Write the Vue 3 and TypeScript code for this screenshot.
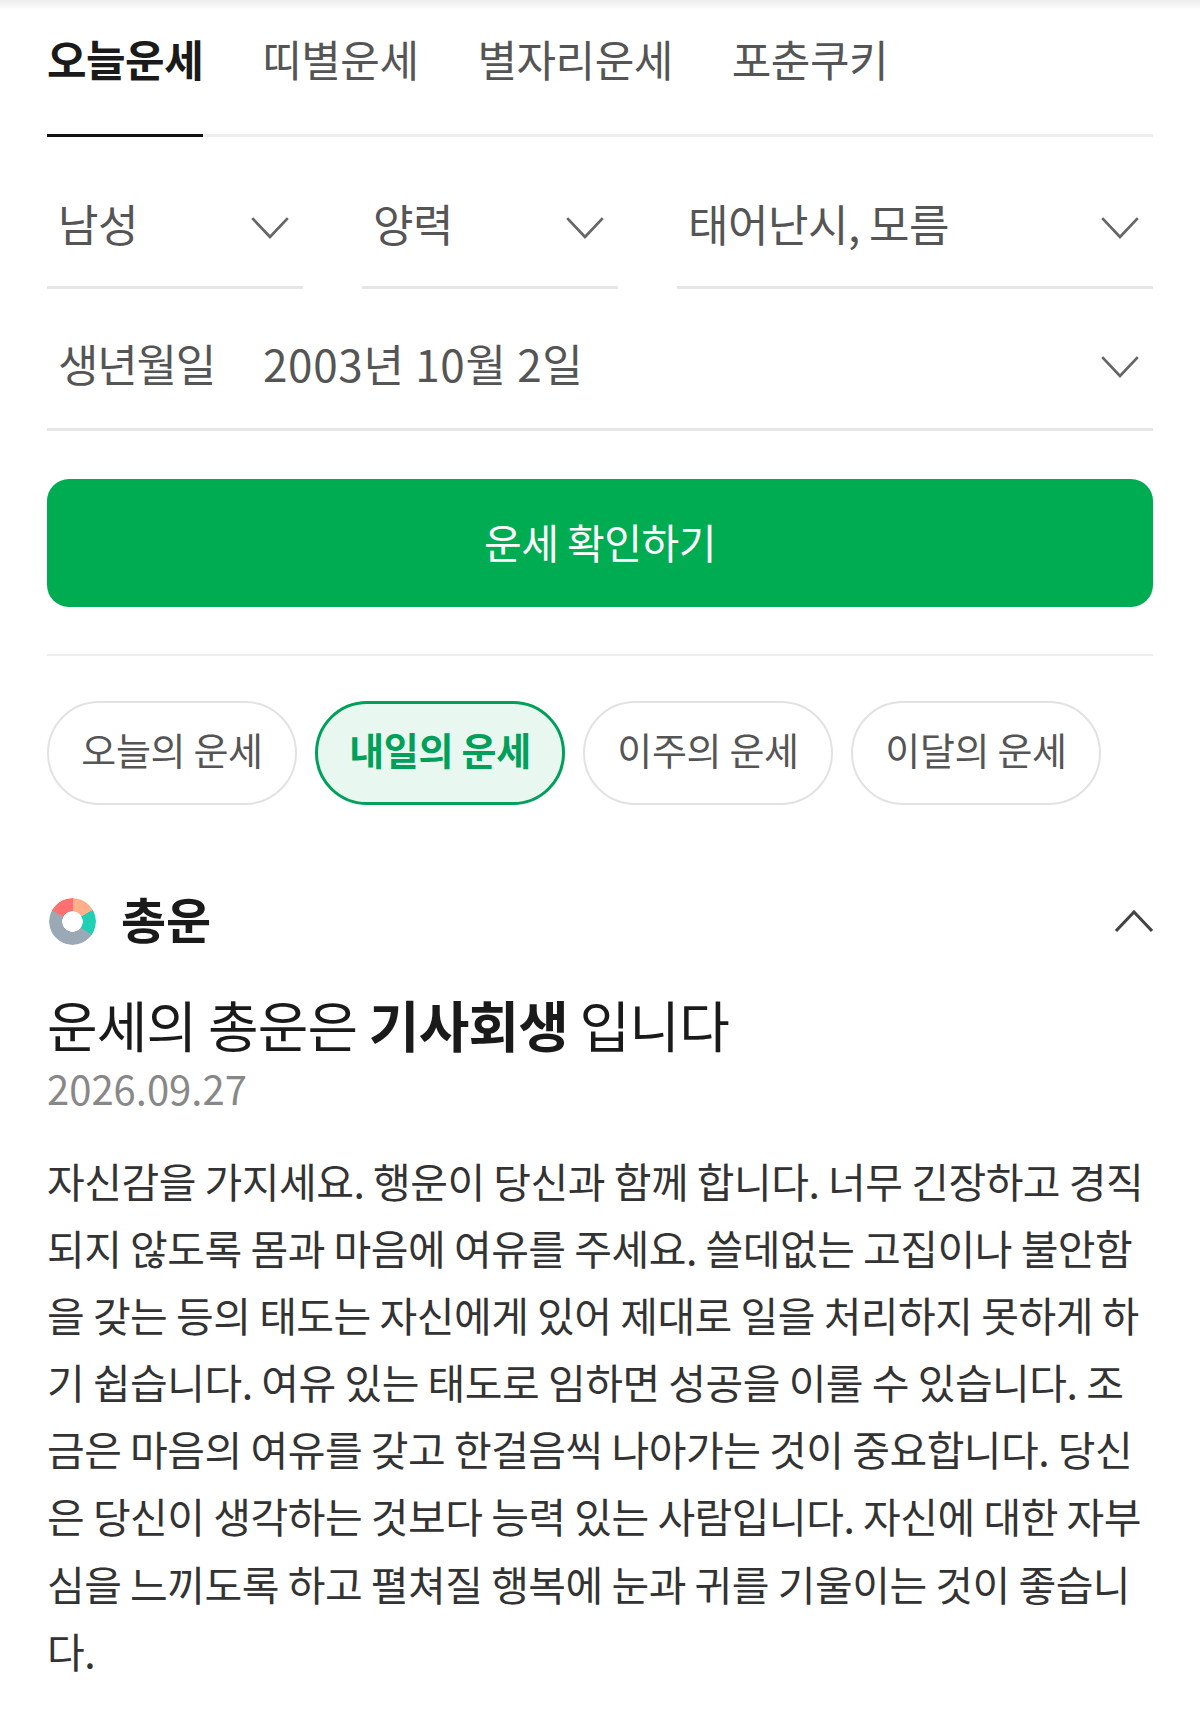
<script setup lang="ts">
const tabs = ['오늘운세', '띠별운세', '별자리운세', '포춘쿠키'];
const chips = ['오늘의 운세', '내일의 운세', '이주의 운세', '이달의 운세'];

// line breaks follow the reference
const lines = [
  '자신감을 가지세요. 행운이 당신과 함께 합니다. 너무 긴장하고 경직',
  '되지 않도록 몸과 마음에 여유를 주세요. 쓸데없는 고집이나 불안함',
  '을 갖는 등의 태도는 자신에게 있어 제대로 일을 처리하지 못하게 하',
  '기 쉽습니다. 여유 있는 태도로 임하면 성공을 이룰 수 있습니다. 조',
  '금은 마음의 여유를 갖고 한걸음씩 나아가는 것이 중요합니다. 당신',
  '은 당신이 생각하는 것보다 능력 있는 사람입니다. 자신에 대한 자부',
  '심을 느끼도록 하고 펼쳐질 행복에 눈과 귀를 기울이는 것이 좋습니',
  '다.',
];
</script>

<template>
  <div class="page">
    <div class="top-shade"></div>
    <div class="content">
      <nav class="tabs">
        <a v-for="(tab, i) in tabs" :key="tab" class="tab" :class="{ active: i === 0 }">{{ tab }}</a>
      </nav>

      <div class="select-row">
        <div class="select gender">
          <span>남성</span>
          <svg class="chev" viewBox="0 0 36 22"><path d="M1 2 L18 20 L35 2" /></svg>
        </div>
        <div class="select calendar">
          <span>양력</span>
          <svg class="chev" viewBox="0 0 36 22"><path d="M1 2 L18 20 L35 2" /></svg>
        </div>
        <div class="select time">
          <span>태어난시, 모름</span>
          <svg class="chev" viewBox="0 0 36 22"><path d="M1 2 L18 20 L35 2" /></svg>
        </div>
      </div>

      <div class="select birth">
        <span class="birth-label">생년월일</span>
        <span class="birth-value">2003년 10월 2일</span>
        <svg class="chev" viewBox="0 0 36 22"><path d="M1 2 L18 20 L35 2" /></svg>
      </div>

      <button class="submit">운세 확인하기</button>

      <div class="chips">
        <button v-for="(chip, i) in chips" :key="chip" class="chip" :class="{ on: i === 1 }">{{ chip }}</button>
      </div>

      <section class="fortune">
        <div class="fortune-head">
          <span class="donut"></span>
          <h2>총운</h2>
          <svg class="chev-up" viewBox="0 0 38 22"><path d="M1 21 L19 2 L37 21" /></svg>
        </div>
        <h3>운세의 총운은 <b>기사회생</b> 입니다</h3>
        <div class="date">2026.09.27</div>
        <p class="body">
          <span v-for="line in lines" :key="line">{{ line }}</span>
        </p>
      </section>
    </div>
  </div>
</template>

<style scoped>
.page {
  position: relative;
  width: 1200px;
  height: 1723px;
  background: #fff;
  overflow: hidden;
  font-family: "Noto Sans CJK KR", "Noto Sans", sans-serif;
  color: #555;
}
.top-shade {
  position: absolute;
  top: 0;
  left: 0;
  right: 0;
  height: 10px;
  background: linear-gradient(#ececec, #fff);
}
.content {
  padding: 0 47px;
}
.tabs {
  display: flex;
  gap: 59px;
  height: 137px;
  border-bottom: 3px solid #eee;
  box-sizing: border-box;
}
.tab {
  height: 137px;
  box-sizing: border-box;
  padding-top: 31px;
  font-size: 43px;
  line-height: 54px;
  letter-spacing: -0.5px;
  color: #555;
  white-space: nowrap;
}
.tab.active {
  color: #1a1a1a;
  font-weight: 700;
  border-bottom: 3px solid #111;
}
.select-row {
  display: flex;
  gap: 59px;
}
.select {
  display: flex;
  align-items: center;
  justify-content: space-between;
  box-sizing: border-box;
  border-bottom: 3px solid #e6e6e6;
  padding: 0 14px 0 11px;
  font-size: 44px;
  letter-spacing: -0.5px;
  color: #555;
}
.select-row .select {
  height: 152px;
  padding-top: 22px;
}
.gender,
.calendar {
  width: 256px;
}
.time {
  flex: 1;
}
.chev {
  width: 38px;
  height: 23px;
  margin-top: 10px;
  fill: none;
  stroke: #666;
  stroke-width: 2.6;
}
.birth {
  height: 142px;
  padding-top: 8px;
}
.birth-label {
  width: 205px;
  letter-spacing: -1.2px;
}
.birth-value {
  flex: 1;
  letter-spacing: 0.7px;
}
.birth .chev {
  margin-top: 8px;
}
.submit {
  display: block;
  width: 100%;
  height: 128px;
  margin-top: 48px;
  border: 0;
  border-radius: 22px;
  background: #00ac52;
  color: #fff;
  font: 400 41px "Noto Sans CJK KR", sans-serif;
  letter-spacing: -0.5px;
  padding: 0 0 4px;
}
.chips {
  display: flex;
  gap: 18px;
  margin-top: 47px;
  padding-top: 45px;
  border-top: 2px solid #eee;
}
.chip {
  width: 250px;
  height: 104px;
  box-sizing: border-box;
  border: 2px solid #e2e2e2;
  border-radius: 52px;
  background: #fff;
  color: #555;
  font: 400 38px "Noto Sans CJK KR", sans-serif;
  letter-spacing: -0.3px;
  padding: 0 0 10px;
}
.chip.on {
  border: 3px solid #00a05a;
  background: #e8f7ef;
  color: #00a05a;
  font-weight: 700;
}
.fortune {
  margin-top: 89px;
}
.fortune-head {
  display: flex;
  align-items: center;
  height: 54px;
}
.donut {
  width: 47px;
  height: 47px;
  margin-left: 2px;
  border-radius: 50%;
  background: conic-gradient(from -62deg, #ff7070 0 62deg, #ffb08a 62deg 122deg, #1fd0b4 122deg 187deg, #9aa9b5 187deg 360deg);
  -webkit-mask: radial-gradient(circle, transparent 10px, #000 10.5px);
  mask: radial-gradient(circle, transparent 10px, #000 10.5px);
}
h2 {
  flex: 1;
  margin: 0 0 0 25px;
  padding-bottom: 6px;
  font-size: 49px;
  line-height: 54px;
  font-weight: 700;
  color: #1a1a1a;
}
.chev-up {
  width: 38px;
  height: 22px;
  fill: none;
  stroke: #444;
  stroke-width: 3;
}
h3 {
  margin: 40px 0 0;
  font-size: 55px;
  line-height: 70px;
  font-weight: 400;
  letter-spacing: -0.8px;
  color: #1a1a1a;
}
h3 b {
  font-weight: 700;
}
.date {
  margin-top: 5px;
  font-size: 40px;
  line-height: 50px;
  color: #888;
}
.body {
  margin: 34px 0 0;
  font-size: 41px;
  line-height: 67.1px;
  letter-spacing: -0.5px;
  color: #333;
}
.body span {
  display: block;
  white-space: nowrap;
}
</style>
